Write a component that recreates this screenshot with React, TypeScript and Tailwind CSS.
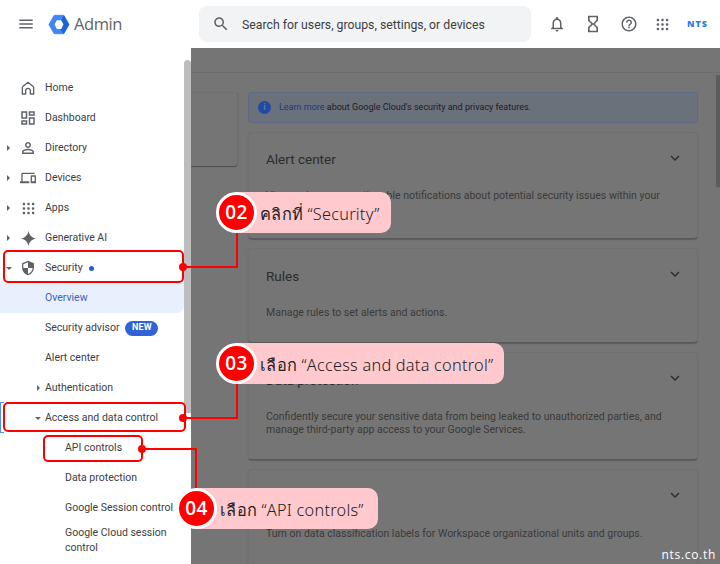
import { ReactNode } from 'react';

const P = {
    menu: 'M3 18h18v-2H3v2zm0-5h18v-2H3v2zm0-7v2h18V6H3z',
    search: 'M15.5 14h-.79l-.28-.27C15.41 12.59 16 11.11 16 9.5 16 5.91 13.09 3 9.5 3S3 5.91 3 9.5 5.91 16 9.5 16c1.61 0 3.09-.59 4.23-1.57l.27.28v.79l5 4.99L20.49 19l-4.99-5zm-6 0C7.01 14 5 11.99 5 9.5S7.01 5 9.5 5 14 7.01 14 9.5 11.99 14 9.5 14z',
    bell: 'M12 22c1.1 0 2-.9 2-2h-4c0 1.1.9 2 2 2zm6-6v-5c0-3.07-1.63-5.64-4.5-6.32V4c0-.83-.67-1.5-1.5-1.5s-1.5.67-1.5 1.5v.68C7.64 5.36 6 7.92 6 11v5l-2 2v1h16v-1l-2-2zm-2 1H8v-6c0-2.48 1.51-4.5 4-4.5s4 2.02 4 4.5v6z',
    hourglass: 'M6 2v6h.01L6 8.01 10 12l-4 4 .01.01H6V22h12v-5.99h-.01L18 16l-4-4 4-3.99-.01-.01H18V2H6zm10 14.5V20H8v-3.5l4-4 4 4zm-4-5l-4-4V4h8v3.5l-4 4z',
    help: 'M11 18h2v-2h-2v2zm1-16C6.48 2 2 6.48 2 12s4.48 10 10 10 10-4.48 10-10S17.52 2 12 2zm0 18c-4.41 0-8-3.59-8-8s3.59-8 8-8 8 3.59 8 8-3.59 8-8 8zm0-14c-2.21 0-4 1.79-4 4h2c0-1.1.9-2 2-2s2 .9 2 2c0 2-3 1.75-3 5h2c0-2.25 3-2.5 3-5 0-2.21-1.79-4-4-4z',
    expand: 'M16.59 8.59L12 13.17 7.41 8.59 6 10l6 6 6-6z',
    dashboard: 'M19 5v2h-4V5h4M9 5v6H5V5h4m10 8v6h-4v-6h4M9 17v2H5v-2h4M21 3h-8v6h8V3zM11 3H3v10h8V3zm10 8h-8v10h8V11zm-10 4H3v6h8v-6z',
    person: 'M12 5.9c1.16 0 2.1.94 2.1 2.1s-.94 2.1-2.1 2.1S9.9 9.16 9.9 8s.94-2.1 2.1-2.1m0 9c2.97 0 6.1 1.46 6.1 2.1v1.1H5.9V17c0-.64 3.13-2.1 6.1-2.1M12 4C9.79 4 8 5.79 8 8s1.79 4 4 4 4-1.79 4-4-1.79-4-4-4zm0 9c-2.67 0-8 1.34-8 4v3h16v-3c0-2.66-5.33-4-8-4z',
    devices: 'M4 6h18V4H4c-1.1 0-2 .9-2 2v11H0v3h14v-3H4V6zm19 2h-6c-.55 0-1 .45-1 1v10c0 .55.45 1 1 1h6c.55 0 1-.45 1-1V9c0-.55-.45-1-1-1zm-1 9h-4v-7h4v7z',
    shield: 'M12 1L3 5v6c0 5.55 3.84 10.74 9 12 5.16-1.26 9-6.45 9-12V5l-9-4zm0 10.99h7c-.53 4.12-3.28 7.79-7 8.94V12H5V6.3l7-3.11v8.8z',
    spark: 'M12 1c.9 6 4.9 10.100 11 11-6.100.9-10.100 5-11 11-.9-6-4.900-10.100-11-11 6.100-.9 10.100-5 11-11z',
};

const Icon = ({ d, className }: { d: string; className: string }) => (
    <svg viewBox="0 0 24 24" className={`shrink-0 ${className}`} fill="currentColor">
        <path d={d} />
    </svg>
);

const Home = () => (
    <svg viewBox="0 0 24 24" className="w-4 h-4 shrink-0" fill="none" stroke="currentColor" strokeWidth="2" strokeLinejoin="round">
        <path d="M3.500 21V10.500L12 3.500l8.500 7V21H15.500v-5a3.500 3.500 0 0 0-7 0v5z" />
    </svg>
);

const Dots = ({ className = '' }: { className?: string }) => (
    <svg viewBox="0 0 18 18" className={`shrink-0 ${className}`} fill="currentColor">
        {[2, 7.5, 13].map((y) =>
            [2, 7.5, 13].map((x) => <rect key={`${x}-${y}`} x={x} y={y} width="3" height="3" rx="1.2" />),
        )}
    </svg>
);

const Caret = ({ open = false }: { open?: boolean }) => (
    <span
        className={
            open
                ? 'w-0 h-0 border-x-[3px] border-x-transparent border-t-[3px] border-t-[#5f6368]'
                : 'w-0 h-0 border-y-[3.5px] border-y-transparent border-l-[3px] border-l-[#5f6368]'
        }
    />
);

type RowProps = {
    icon?: ReactNode;
    caret?: 'open' | 'closed';
    label: string;
    extra?: ReactNode;
};

// top level sidebar item, icon column starts at x=20
const NavRow = ({ icon, caret, label, extra }: RowProps) => (
    <div className="h-[30px] flex items-center relative text-[#3c4043]">
        {caret && (
            <span className={`absolute top-0 h-full flex items-center ${caret === 'open' ? 'left-[6px]' : 'left-[7px]'}`}>
                <Caret open={caret === 'open'} />
            </span>
        )}
        <span className="w-[45px] pl-5 shrink-0 text-[#5f6368]">
            <span className="w-4 flex justify-center">{icon}</span>
        </span>
        <span>{label}</span>
        {extra}
    </div>
);

const SubRow = ({ label, caret, extra, active }: { label: string; caret?: 'open' | 'closed'; extra?: ReactNode; active?: boolean }) => (
    <div className={`h-[30px] flex items-center pl-[45px] relative rounded-br-lg ${active ? 'bg-[#e8f0fe] text-[#3b5fc4]' : 'text-[#3c4043]'}`}>
        {caret && (
            <span className={`absolute top-0 h-full flex items-center ${caret === 'open' ? 'left-[35px]' : 'left-[37px]'}`}>
                <Caret open={caret === 'open'} />
            </span>
        )}
        <span>{label}</span>
        {extra}
    </div>
);

const LeafRow = ({ label }: { label: string }) => (
    <div className="h-[30px] flex items-center pl-[65px] text-[#3c4043]">{label}</div>
);

const Card = ({ title, body, className }: { title: string; body: ReactNode; className: string }) => (
    <div className={`bg-[#757575] border border-[#707070] border-b-[#585858] rounded-sm px-[17px] relative shadow-[0_1px_1px_rgba(0,0,0,0.2)] ${className}`}>
        <div className="text-[13.5px] text-[#2c2c2c] mt-4 leading-5">{title}</div>
        <Icon d={P.expand} className="absolute right-[13px] top-[16px] w-[18px] h-[18px] text-[#2f2f2f]" />
        <div className="text-[10.5px] leading-[13px] text-[#3a3a3a]">{body}</div>
    </div>
);

const Callout = ({ n, text, className, width }: { n: string; text: string; className: string; width: string }) => (
    <div className={`absolute h-[41px] flex items-center ${className}`}>
        <div className={`absolute left-5 top-0 h-[41px] bg-[#ffc9ce] rounded-r-[10px] ${width}`} />
        <div className="relative w-[41px] h-[41px] rounded-full bg-[#ff0000] border-[3px] border-white flex items-center justify-center text-white text-[19px] font-semibold tracking-wide font-['Open_Sans',sans-serif]">
            {n}
        </div>
        <span className="relative ml-[3px] pt-[3px] text-[16.3px] tracking-[0.25px] text-[#222222] whitespace-nowrap font-['Noto_Sans','Open_Sans',sans-serif] font-light">
            {text}
        </span>
    </div>
);

export default function App() {
    return (
        <div className="w-[720px] h-[564px] relative overflow-hidden bg-white font-['Roboto',sans-serif] text-[10.5px]">
            {/* Header */}
            <header className="h-12 flex items-center bg-white text-[#5f6368]">
                <div className="w-[199px] shrink-0 flex items-center">
                    <Icon d={P.menu} className="ml-[17px] w-[18px] h-[18px]" />
                    <svg viewBox="0 0 24 24" className="ml-[13px] w-[22px] h-[21px]">
                        <path d="M6.500 1.500h11L23.500 12l-6 10.500h-11L.5 12z" fill="#4285f4" stroke="#4285f4" strokeLinejoin="round" />
                        <path d="M17.500 1.500 23.500 12l-6 10.500-3.500-4.500 3-6-2.500-5z" fill="#1a63d8" />
                        <path d="M7 12 9.500 7h5L17 12l-2.500 5h-5z" fill="#fff" />
                    </svg>
                    <span className="ml-1 text-[16.5px] font-['Open_Sans',sans-serif] tracking-tight">Admin</span>
                </div>
                <div className="w-[332px] h-9 bg-[#f1f3f4] rounded-lg flex items-center pl-[13px] text-[#3c4043] text-[12.25px]">
                    <Icon d={P.search} className="w-[18px] h-[18px] text-[#5f6368]" />
                    <span className="ml-3 pt-[3px]">Search for users, groups, settings, or devices</span>
                </div>
                <Icon d={P.bell} className="ml-[17px] w-[18px] h-[18px]" />
                <Icon d={P.hourglass} className="ml-[17px] w-5 h-5" />
                <Icon d={P.help} className="ml-[17px] w-[18px] h-[18px]" />
                <Dots className="ml-[17px] w-[15px] h-[15px]" />
                <span className="ml-[17px] text-[9px] font-black text-[#2b7de0] tracking-[1px] font-['Open_Sans',sans-serif]">NTS</span>
            </header>

            <div className="flex h-[516px]">
                {/* Sidebar */}
                <aside className="w-[184px] shrink-0 pt-[25px] overflow-hidden">
                    <NavRow icon={<Home />} label="Home" />
                    <NavRow icon={<Icon d={P.dashboard} className="w-[18px] h-[18px]" />} label="Dashboard" />
                    <NavRow caret="closed" icon={<Icon d={P.person} className="w-[18px] h-[18px]" />} label="Directory" />
                    <NavRow caret="closed" icon={<Icon d={P.devices} className="w-4 h-4" />} label="Devices" />
                    <NavRow caret="closed" icon={<Dots className="w-[15px] h-[15px]" />} label="Apps" />
                    <NavRow caret="closed" icon={<Icon d={P.spark} className="w-[17px] h-[17px]" />} label="Generative AI" />
                    <NavRow
                        caret="open"
                        icon={<Icon d={P.shield} className="w-[16px] h-[16px]" />}
                        label="Security"
                        extra={<span className="ml-[6px] w-[5px] h-[5px] rounded-full bg-[#2a5bd7]" />}
                    />
                    <SubRow label="Overview" active />
                    <SubRow
                        label="Security advisor"
                        extra={
                            <span className="ml-[6px] px-[6.5px] h-[15px] rounded-full bg-[#2f63d8] text-white text-[9px] font-bold flex items-center tracking-wide">
                                NEW
                            </span>
                        }
                    />
                    <SubRow label="Alert center" />
                    <SubRow label="Authentication" caret="closed" />
                    <SubRow label="Access and data control" caret="open" />
                    <LeafRow label="API controls" />
                    <LeafRow label="Data protection" />
                    <LeafRow label="Google Session control" />
                    <div className="pl-[65px] pt-[2px] leading-[15px] text-[#3c4043]">
                        Google Cloud session
                        <br />
                        control
                    </div>
                </aside>

                {/* Sidebar scrollbar */}
                <div className="w-[7px] shrink-0 bg-white">
                    <div className="mt-3 h-[353px] bg-[#bdbdbd] rounded-t-full rounded-bl-md" />
                </div>

                {/* Dimmed main content */}
                <main className="flex-1 bg-[#757575] relative overflow-hidden">
                    <div className="h-[25px] border-b border-[#6c6c6c]" />
                    <div className="flex pt-[19px]">
                        <div className="w-[47px] h-[74px] shrink-0 border-r border-t border-r-[#6e6e6e] border-t-[#707070] rounded-br-sm shadow-[0_1px_1px_rgba(0,0,0,0.35)]" />
                        <div className="ml-[10px] w-[450px] flex flex-col gap-[9px]">
                            <div className="h-[31px] bg-[#6b717b] border border-[#5f6b84] rounded-[3px] flex items-center pl-[9px] text-[9px] text-[#1c1c1c]">
                                <span className="w-[13px] h-[13px] rounded-full bg-[#1f4aa8] text-[#757575] text-[9px] font-bold flex items-center justify-center">i</span>
                                <span className="ml-2 pt-px">
                                    <span className="text-[#1a3a80]">Learn more</span> about Google Cloud's security and privacy features.
                                </span>
                            </div>
                            <Card
                                title="Alert center"
                                className="h-[107px]"
                                body={
                                    <p className="mt-5">
                                        View and manage actionable notifications about potential security issues within your
                                        <br />
                                        domain.
                                    </p>
                                }
                            />
                            <Card
                                title="Rules"
                                className="h-[95px] pt-px"
                                body={<p className="mt-5">Manage rules to set alerts and actions.</p>}
                            />
                            <Card
                                title="Data protection"
                                className="h-[108px] pt-px"
                                body={
                                    <p className="mt-5">
                                        Confidently secure your sensitive data from being leaked to unauthorized parties, and
                                        <br />
                                        manage third-party app access to your Google Services.
                                    </p>
                                }
                            />
                            <Card
                                title="Data classification"
                                className="h-[109px] pt-px"
                                body={<p className="mt-5">Turn on data classification labels for Workspace organizational units and groups.</p>}
                            />
                        </div>
                    </div>
                    <div className="absolute right-0 top-[27px] w-[4px] h-[112px] bg-[#5c5c5c]" />
                </main>
            </div>

            {/* Focus ring left over on the selected row */}
            <div className="absolute left-0 top-[402px] w-[4px] h-[31px] border-y border-l border-[#4d90fe]" />

            {/* Tutorial highlights */}
            <div className="absolute left-[3px] top-[250px] w-[181px] h-[33px] border-2 border-[#ff0000] rounded-[5px]" />
            <div className="absolute left-[3px] top-[402px] w-[183px] h-[30px] border-2 border-[#ff0000] rounded-[5px]" />
            <div className="absolute left-[43px] top-[435px] w-[100px] h-[27px] border-2 border-[#ff0000] rounded-[5px]" />

            {/* Connectors */}
            <div className="absolute left-[183px] top-[232px] w-[55px] h-[36px] border-r-2 border-b-2 border-[#ff0000]" />
            <div className="absolute left-[183px] top-[382px] w-[55px] h-[37px] border-r-2 border-b-2 border-[#ff0000]" />
            <div className="absolute left-[142px] top-[448px] w-[55px] h-[42px] border-r-2 border-t-2 border-[#ff0000]" />
            <div className="absolute left-[179px] top-[263px] w-2 h-2 rounded-full bg-[#ff0000]" />
            <div className="absolute left-[179px] top-[414px] w-2 h-2 rounded-full bg-[#ff0000]" />
            <div className="absolute left-[138px] top-[445px] w-2 h-2 rounded-full bg-[#ff0000]" />

            <Callout n="02" text="คลิกที่ “Security”" className="left-[216px] top-[192px]" width="w-[155px]" />
            <Callout n="03" text="เลือก “Access and data control”" className="left-[216px] top-[343px]" width="w-[268px]" />
            <Callout n="04" text="เลือก “API controls”" className="left-[176px] top-[488px]" width="w-[182px]" />

            <div className="absolute right-[4px] bottom-0 text-[12px] tracking-[0.7px] text-white font-['Open_Sans',sans-serif]">nts.co.th</div>
        </div>
    );
}
